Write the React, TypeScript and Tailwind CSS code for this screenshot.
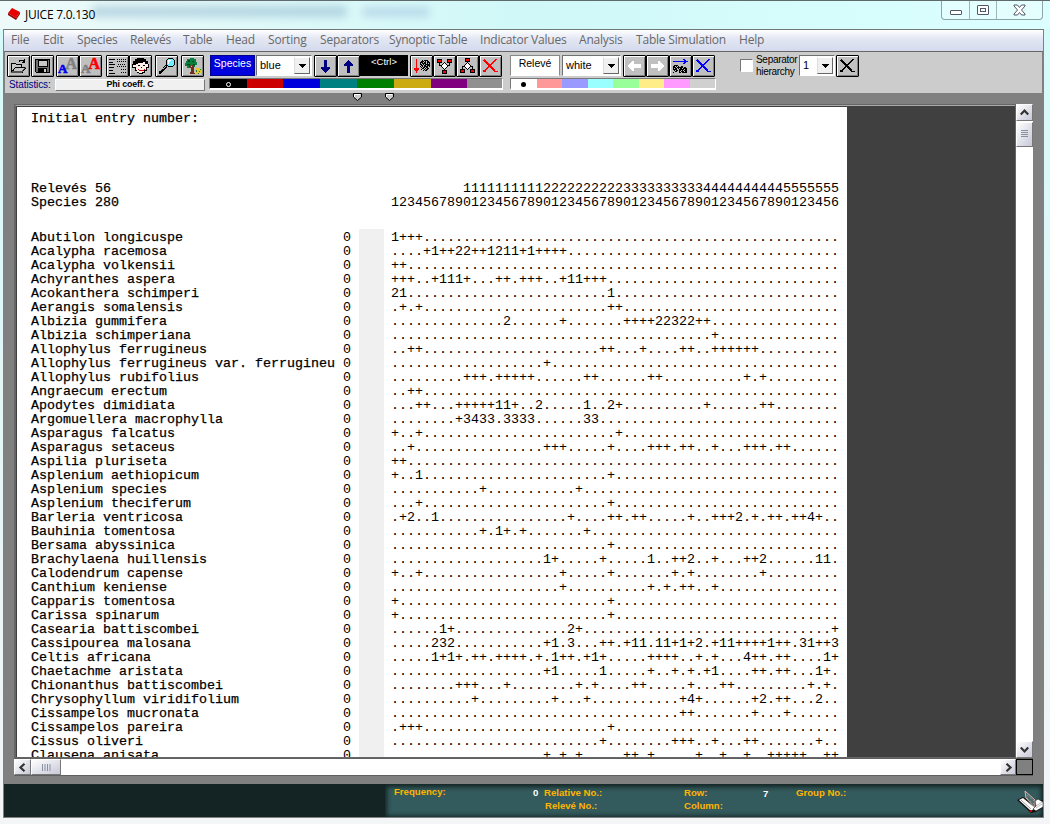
import React from "react";

type Run = [number, string];

const SPECIES: [string, Run[]][] = [
  ["Abutilon longicuspe", [[0, "1+++"]]],
  ["Acalypha racemosa", [[4, "+1++22++1211+1++++"]]],
  ["Acalypha volkensii", [[0, "++"]]],
  ["Achyranthes aspera", [[0, "+++"], [5, "+111+"], [13, "++"], [16, "+++"], [21, "+11+++"]]],
  ["Acokanthera schimperi", [[0, "21"], [27, "1"]]],
  ["Aerangis somalensis", [[1, "+"], [3, "+"], [27, "++"]]],
  ["Albizia gummifera", [[14, "2"], [21, "+"], [29, "++++22322++"]]],
  ["Albizia schimperiana", [[40, "+"]]],
  ["Allophylus ferrugineus", [[2, "++"], [26, "++"], [31, "+"], [36, "++"], [40, "++++++"]]],
  ["Allophylus ferrugineus var. ferrugineu", [[19, "+"]]],
  ["Allophylus rubifolius", [[9, "+++"], [13, "+++++"], [24, "++"], [32, "++"], [44, "+"], [46, "+"]]],
  ["Angraecum erectum", [[2, "++"]]],
  ["Apodytes dimidiata", [[3, "++"], [8, "+++++11+"], [18, "2"], [24, "1"], [27, "2+"], [39, "+"], [46, "++"]]],
  ["Argomuellera macrophylla", [[8, "+3433"], [14, "3333"], [24, "33"]]],
  ["Asparagus falcatus", [[0, "+"], [3, "+"], [28, "+"]]],
  ["Asparagus setaceus", [[2, "+"], [19, "+++"], [27, "+"], [32, "+++"], [36, "++"], [40, "+"], [44, "+++"], [48, "++"]]],
  ["Aspilia pluriseta", [[0, "++"]]],
  ["Asplenium aethiopicum", [[0, "+"], [3, "1"], [27, "+"]]],
  ["Asplenium species", [[11, "+"], [23, "+"]]],
  ["Asplenium theciferum", [[3, "+"], [27, "+"]]],
  ["Barleria ventricosa", [[1, "+2"], [5, "1"], [22, "+"], [27, "++"], [30, "++"], [37, "+"], [40, "+++2"], [45, "+"], [47, "++"], [50, "++4+"]]],
  ["Bauhinia tomentosa", [[11, "+"], [13, "1+"], [16, "+"], [24, "+"]]],
  ["Bersama abyssinica", [[27, "+"]]],
  ["Brachylaena huillensis", [[19, "1+"], [26, "+"], [32, "1"], [35, "++2"], [40, "+"], [44, "++2"], [53, "11"]]],
  ["Calodendrum capense", [[0, "+"], [3, "+"], [21, "+"], [27, "+"], [35, "+"], [37, "+"], [46, "+"]]],
  ["Canthium keniense", [[21, "+"], [32, "+"], [34, "+"], [36, "++"], [40, "+"]]],
  ["Capparis tomentosa", [[0, "+"], [27, "+"]]],
  ["Carissa spinarum", [[0, "+"], [27, "+"]]],
  ["Casearia battiscombei", [[6, "1+"], [22, "2+"], [55, "+"]]],
  ["Cassipourea malosana", [[5, "232"], [19, "+1"], [22, "3"], [26, "++"], [29, "+11"], [33, "11+1+2"], [40, "+11++++1++"], [51, "31++3"]]],
  ["Celtis africana", [[5, "1+1+"], [10, "++"], [13, "++++"], [18, "+"], [20, "1++"], [24, "+1+"], [32, "++++"], [38, "+"], [40, "+"], [44, "4++"], [48, "++"], [54, "1+"]]],
  ["Chaetachme aristata", [[19, "+1"], [26, "1"], [32, "+"], [35, "+"], [37, "+"], [39, "+1"], [45, "++"], [48, "++"], [53, "1+"]]],
  ["Chionanthus battiscombei", [[8, "+++"], [14, "+"], [23, "+"], [25, "+"], [30, "++"], [37, "+"], [41, "++"], [52, "+"], [54, "+"]]],
  ["Chrysophyllum viridifolium", [[10, "+"], [20, "+"], [24, "+"], [36, "+4+"], [45, "+2"], [48, "++"], [53, "2"]]],
  ["Cissampelos mucronata", [[36, "++"], [45, "+"], [49, "+"]]],
  ["Cissampelos pareira", [[1, "+++"], [27, "+"]]],
  ["Cissus oliveri", [[26, "+"], [35, "+++"], [40, "+"], [44, "++"], [53, "+"]]],
  ["Clausena anisata", [[19, "+"], [21, "+"], [23, "+"], [29, "++"], [32, "+"], [38, "+"], [41, "+"], [44, "+"], [47, "+++++"], [54, "++"]]],
];

const expand = (runs: Run[]) => {
  const cells = Array<string>(56).fill(".");
  runs.forEach(([at, text]) => [...text].forEach((ch, i) => (cells[at + i] = ch)));
  return cells.join("");
};

const numbers = Array.from({ length: 56 }, (_, i) => i + 1);
const tens = numbers.map((n) => (n < 10 ? " " : Math.floor(n / 10))).join("");
const ones = numbers.map((n) => n % 10).join("");

const MENU: [string, string][] = [
  ["File", "w-[32px]"],
  ["Edit", "w-[34px]"],
  ["Species", "w-[53px]"],
  ["Relevés", "w-[53px]"],
  ["Table", "w-[43px]"],
  ["Head", "w-[42px]"],
  ["Sorting", "w-[52px]"],
  ["Separators", "w-[69px]"],
  ["Synoptic Table", "w-[91px]"],
  ["Indicator Values", "w-[99px]"],
  ["Analysis", "w-[57px]"],
  ["Table Simulation", "w-[103px]"],
  ["Help", "w-[40px]"],
];

function Art({ children }: { children: React.ReactNode }) {
  return (
    <svg width="21" height="20" viewBox="-1 -1 21 20" className="shrink-0" shapeRendering="crispEdges" fill="none">
      {children}
    </svg>
  );
}

function Btn({ children }: { children: React.ReactNode }) {
  return (
    <div className="flex h-[22px] w-[23px] shrink-0 items-center justify-center rounded-[1px] border border-black bg-[#c0c0c0] shadow-[inset_1px_1px_0_#fff,inset_-1px_-1px_0_#808080]">
      {children}
    </div>
  );
}

function Combo({ text, className }: { text: string; className: string }) {
  return (
    <div className={`flex h-[21px] shrink-0 items-center border border-t-[#707070] border-l-[#707070] border-r-white border-b-white bg-white p-px ${className}`}>
      <span className="flex-1 pl-[2px] text-[11px] leading-none text-black">{text}</span>
      <div className="flex h-full w-[16px] items-center justify-center border border-t-white border-l-[#ddd] border-r-[#666] border-b-[#666] bg-[#f0f0f0]">
        <svg width="7" height="4" viewBox="0 0 7 4" shapeRendering="crispEdges"><path d="M0 0h7v1H6v1H5v1H4v1H3V3H2V2H1V1H0z" /></svg>
      </div>
    </div>
  );
}

const Cross = ({ color }: { color: string }) => (
  <Art>
    <path d="M3 3l11 11" stroke={color} strokeWidth="2.4" />
    <path d="M15 2L4 14" stroke={color} strokeWidth="1.5" />
    <path d="M2 13h3v2H2zM13 14h4v1h-4z" fill={color} />
  </Art>
);

const noise = [
  "..#.####..", ".###.#.##.", "###.##.###", "#.####.#.#", "##.#.#####", ".##.##.###", "#.#.####.#", ".#.##.##..", "..##.#.##.", ".#..#.##..", "...#.##...",
];

function Noise({ x, y, rows = noise }: { x: number; y: number; rows?: string[] }) {
  return (
    <>
      {rows.map((r, j) => [...r].map((c, i) => (c === "#" ? <rect key={`${i}-${j}`} x={x + i} y={y + j} width="1" height="1" fill="#000" /> : null)))}
    </>
  );
}

function Nodes({ flip }: { flip?: boolean }) {
  return (
    <Art>
      <g transform={flip ? "translate(0 18) scale(1 -1)" : undefined}>
        <path d="M4.500 5v3.500H7M14.500 5v3.500H12M9.500 12v3" stroke="#000" />
        <path d="M2 2h5v4H2zM12 2h5v4h-5zM7 13h5v4H7z" fill="#000" />
        <path d="M3 3h3v2H3zM13 3h3v2h-3zM8 14h3v2H8z" fill="#f00" />
        <path d="M9 5h1v1h1v1h1v1h1v2h-1v1h-1v1h-1v1H9v-1H8v-1H7v-1H6V8h1V7h1V6h1z" fill="#000" />
        <path d="M9 6h1v1h1v1h1v2h-1v1h-1v1H9v-1H8v-1H7V8h1V7h1z" fill="#fff" />
      </g>
    </Art>
  );
}

const VArrow = ({ up }: { up?: boolean }) => (
  <Art>
    <path d={up ? "M9 3h1v1h1v1h1v1h1v1h1v2h-3v7H8V9H5V7h1V6h1V5h1V4h1z" : "M8 3h3v7h3v2h-1v1h-1v1h-1v1h-1v1H9v-1H8v-1H7v-1H6v-1H5v-2h3z"} fill="#000080" />
  </Art>
);

const WArrow = ({ right }: { right?: boolean }) => (
  <Art>
    <path transform={right ? "translate(19 0) scale(-1 1)" : undefined} d="M3 8h1V7h1V6h1V5h1V4h2v3h7v4H9v3H7v-1H6v-1H5v-1H4v-1H3z" fill="#fff" />
  </Art>
);

function LetterPair({ front, back }: { front: string; back: string }) {
  return (
    <div className="relative h-[18px] w-[19px] font-['Liberation_Serif',serif] font-bold leading-none [-webkit-text-stroke:0.6px]">
      <span className={`absolute right-0 top-[-2px] text-[16px] leading-[18px] ${back}`}>A</span>
      <span className={`absolute bottom-[-1px] left-0 text-[13px] leading-[14px] ${front}`}>A</span>
    </div>
  );
}

const STRIP_A: [string, string][] = [
  ["bg-black", "w-[37px]"], ["bg-[#cc0000]", "w-[36px]"], ["bg-[#0000dd]", "w-[37px]"], ["bg-[#008080]", "w-[37px]"],
  ["bg-[#008000]", "w-[37px]"], ["bg-[#ccaa11]", "w-[37px]"], ["bg-[#800080]", "w-[36px]"], ["bg-[#909090]", "flex-1"],
];
const STRIP_B = ["bg-white", "bg-[#ff9999]", "bg-[#9999ff]", "bg-[#99ffff]", "bg-[#99ff99]", "bg-[#ffee88]", "bg-[#ff99ff]", "bg-[#d0d0d0]"];

function Toolbar() {
  return (
    <div className="flex h-[43px] items-start border border-[#808080] border-t-[#666] bg-[#cccccc] pl-[2px] pt-[3px]">
      <div className="w-[198px]">
        <div className="flex h-[23px]">
          <Btn>
            <Art>
              <path d="M2.500 15V6.500h4l1 1h5V10M2.500 15.500h10.500l4-5.500H6.500z" fill="#c8c8c8" stroke="#000" />
              <path d="M2 15.500h11l4-5.500h-1l-4 4H3z" fill="#555" />
              <path d="M10 4.500q3-3 5 0M15.500 2v3.500h-3" stroke="#000" />
            </Art>
          </Btn>
          <div className="w-px" />
          <Btn>
            <Art>
              <path d="M2.500 2.500h14v13h-13l-1-1z" fill="#707070" stroke="#000" />
              <path d="M5 3h9v6H5z" fill="#c8c8c8" stroke="#000" />
              <path d="M5 11h9v4H5z" fill="#000" /><path d="M11 12h2v3h-2z" fill="#ccc" />
            </Art>
          </Btn>
          <div className="w-[2px]" />
          <Btn><LetterPair front="text-[#0000ee]" back="text-[#808080]" /></Btn>
          <Btn><LetterPair front="text-[#808080]" back="text-[#ff0000]" /></Btn>
          <div className="w-[4px]" />
          <Btn>
            <Art>
              <path d="M1 2.500h6M1 5.500h4M1 7.500h6M1 10.500h5M1 13.500h4M1 16.500h6" stroke="#000" />
              <path d="M9 2.500h9M9 4.500h9M10 7.500h8M9 9.500h9M13 12.500h5M13 15.500h5" stroke="#000" strokeDasharray="1 1" />
            </Art>
          </Btn>
          <Btn>
            <Art>
              <path d="M6 1h7v1h2v2h2v3h1v4h-2v3h-2v2h-2v1H8v-1H6v-2H4v-3H1V7h1V4h2V2h2z" fill="#000" />
              <path d="M5 7h2V6h5V5h2v2h3v3h-2v3h-2v2h-2v1H8v-1H6v-2H5v-3H2V8h3z" fill="#fff0e8" />
              <path d="M7 8h2v1H7zM12 8h2v1h-2zM10 10h1v1h-1z" fill="#000" />
              <path d="M7 12h1v1h5v-1h1v1h-1v1H8v-1H7z" fill="#e00000" />
            </Art>
          </Btn>
          <div className="w-[3px]" />
          <Btn>
            <Art>
              <path d="M2 16l8-7" stroke="#000" strokeWidth="2.800" />
              <path d="M3 14l6-5" stroke="#fff" strokeWidth=".7" />
              <path d="M11.500 1.500h4l2 2v4l-2 2h-4l-2-2v-4z" fill="#70f0ff" stroke="#000" />
              <path d="M11 3h3v1h-1v1h-1v2h-1z" fill="#fff" />
            </Art>
          </Btn>
          <div className="w-[3px]" />
          <Btn>
            <Art>
              <path d="M3 4h1V2h3V1h4v1h2v3h1v3h-2v2H9V9H7v2H4V9H2V6h1z" fill="#088040" />
              <path d="M5 3h2v2H5zM9 4h2v1H9zM4 7h3v1H4zM10 7h2v1h-2z" fill="#004820" />
              <path d="M6 8h2v2h1V8h2v6l1 3H7l1-3v-3H7z" fill="#703018" />
              <path d="M12 11h2v2h1v-2h2v2h1v-2h1v3h-1v2h-2v1h-3v-2h-1z" fill="#e0c830" />
              <path d="M13 13h1v2h-1zM16 14h1v1h-1zM15 16h1v1h-1zM17 12h1v1h-1z" fill="#287820" />
            </Art>
          </Btn>
        </div>
        <div className="flex h-[13px] items-center text-[10px]">
          <span className="w-[48px] pl-[2px] tracking-[-0.1px] text-[#000080]">Statistics:</span>
          <span className="flex h-[12px] flex-1 items-center justify-center border border-t-white border-l-white border-r-[#777] border-b-[#777] bg-[#f0f0f0] text-[8.800px] font-bold tracking-[-0.1px] text-black">Phi coeff. C</span>
        </div>
      </div>
      <div className="ml-[4px] w-[294px]">
        <div className="flex h-[23px] pl-px">
          <div className="h-[21px] w-[45px] border border-[#000088] bg-[#0000dd] text-center text-[10.500px] leading-[14px] text-white">Species</div>
          <Combo text="blue" className="ml-px w-[56px]" />
          <div className="w-[2px]" />
          <Btn><VArrow /></Btn>
          <Btn><VArrow up /></Btn>
          <div className="h-[21px] w-[48px] bg-black text-center text-[9.500px] leading-[14px] text-white">&lt;Ctrl&gt;</div>
          <div className="w-[2px]" />
          <Btn>
            <Art>
              <path d="M4.500 2v12M2 11l2.500 4L7 11z" stroke="#f00" fill="#f00" />
              <Noise x={8} y={3} />
            </Art>
          </Btn>
          <Btn><Nodes /></Btn>
          <Btn><Nodes flip /></Btn>
          <Btn><Cross color="#ff0000" /></Btn>
        </div>
        <div className="flex h-[12px] border border-t-[#777] border-l-[#777] border-r-white border-b-[2px] border-b-white">
          {STRIP_A.map(([bg, w], i) => (
            <div key={bg} className={`flex items-center justify-center ${bg} ${w}`}>
              {i === 0 && <span className="mt-px h-[5px] w-[5px] rounded-full border border-white" />}
            </div>
          ))}
        </div>
      </div>
      <div className="ml-[7px] w-[206px]">
        <div className="flex h-[23px]">
          <div className="h-[21px] w-[50px] border border-[#888] border-b-white bg-white text-center text-[10.500px] leading-[14px] text-black">Relevé</div>
          <Combo text="white" className="ml-[2px] w-[59px]" />
          <div className="w-[2px]" />
          <Btn><WArrow /></Btn>
          <Btn><WArrow right /></Btn>
          <Btn>
            <Art>
              <path d="M2 4.500h14M12 2l4 2.500L12 7" stroke="#0000ff" />
              <Noise x={2} y={8} rows={[".####.........", "##.#.#..##....", "###.######.##.", "#.##.#.##.####", "####..#####.##", ".#.##.##.#.###", "..##..#.###.##", "#.....##.#####"]} />
            </Art>
          </Btn>
          <Btn><Cross color="#0000ff" /></Btn>
        </div>
        <div className="flex h-[12px] border border-t-[#777] border-l-[#777] border-r-white border-b-[2px] border-b-white">
          {STRIP_B.map((bg, i) => (
            <div key={bg} className={`flex flex-1 items-center justify-center ${bg}`}>
              {i === 0 && <span className="mt-px h-[5px] w-[5px] rounded-full bg-black" />}
            </div>
          ))}
        </div>
      </div>
      <div className="ml-[24px] flex">
        <div className="mt-[4px] h-[13px] w-[13px] border border-t-[#777] border-l-[#777] border-r-white border-b-white bg-white" />
        <div className="-mt-px ml-[3px] w-[43px] whitespace-nowrap text-[10px] leading-[12px] tracking-[-0.3px] text-black">Separator<br />hierarchy</div>
        <Combo text="1" className="w-[36px]" />
        <div className="w-px" />
        <Btn><Cross color="#000" /></Btn>
      </div>
    </div>
  );
}

function Chevron({ d }: { d: string }) {
  return (
    <svg width="9" height="9" viewBox="0 0 9 9" fill="none"><path d={d} stroke="#333" strokeWidth="2.2" /></svg>
  );
}

const face = "flex shrink-0 items-center justify-center border border-t-white border-l-white border-r-[#777] border-b-[#777] bg-gradient-to-br from-white to-[#c8c8d8]";

function Marker() {
  return (
    <svg width="9" height="8" viewBox="0 0 9 8"><path d="M.5.5h8v3.500l-4 3.500-4-3.500z" fill="#ccc" stroke="#000" /><path d="M1.500 4V1.500H7" stroke="#fff" fill="none" /></svg>
  );
}

function Sheet() {
  return (
    <div className="flex h-[651px] w-[830px] flex-col overflow-hidden bg-white pl-[14px] pt-[5px] font-['Liberation_Mono',monospace] text-[13.333px] leading-[14px] text-black">
      <div className="h-[70px] shrink-0 [-webkit-text-stroke:0.25px_black]">Initial entry number:</div>
      <div className="flex h-[49px] shrink-0 whitespace-pre">
        <div className="w-[360px] [-webkit-text-stroke:0.25px_black]">Relevés 56<br />Species 280</div>
        <div>{tens}<br />{ones}</div>
      </div>
      <div className="flex shrink-0 whitespace-pre">
        <div className="w-[312px] [-webkit-text-stroke:0.25px_black]">{SPECIES.map(([name]) => <div key={name} className="h-[14px]">{name}</div>)}</div>
        <div className="w-[16px]">{SPECIES.map(([name]) => <div key={name} className="h-[14px]">0</div>)}</div>
        <div className="-mt-[2px] mr-[7px] w-[25px] bg-[#f0f0f0]" />
        <div>{SPECIES.map(([name, runs]) => <div key={name} className="h-[14px]">{expand(runs)}</div>)}</div>
      </div>
    </div>
  );
}

function Book() {
  return (
    <svg width="26" height="25" viewBox="0 0 26 25">
      <path d="M0 11l6-3 5 3 7 6 3-6h5v8l-7 4-5 1z" fill="#111" />
      <path d="M2 11l4-2 12 10-4 3z" fill="#fff" />
      <path d="M4 11l10 9" stroke="#777" strokeWidth=".7" />
      <path d="M8 2l10 9v8L9 9z" fill="#48686a" stroke="#e8b0a8" strokeWidth="1" />
      <path d="M10 6l7 6M10 9l7 6" stroke="#a0b8b8" strokeDasharray="1 1" />
      <path d="M18 12l3-2 5 3v5l-7 4-3-2 3-3z" fill="#fff" stroke="#111" strokeWidth=".6" />
      <path d="M19 17l6-4M19 19l6-4" stroke="#888" strokeWidth=".6" />
      <path d="M13 21h2v2h-2z" fill="#d00" />
    </svg>
  );
}

export default function App() {
  return (
    <div className="flex h-[824px] w-[1050px] flex-col overflow-hidden bg-gradient-to-b from-[#d5fafa] via-[#e4f6f6] to-[#f4f5f7] font-['Liberation_Sans',Arial,sans-serif]">
      <header className="flex h-[29px] shrink-0 justify-between border-t border-[#606a6a] bg-gradient-to-r from-[#eefafa] via-[#d0f8f8] to-[#dcffff] pl-[7px] pr-[7px]">
        <div className="relative flex flex-1 items-center">
          <div className="absolute left-[85px] top-[5px] h-[11px] w-[255px] rounded bg-[#7fa9c5]/45 blur-[4px]" />
          <div className="absolute left-[355px] top-[7px] h-[8px] w-[68px] rounded bg-[#7e9fd0]/40 blur-[4px]" />
          <svg width="14" height="13" viewBox="0 0 14 13" className="mb-[3px]"><path d="M1 6l4-5 8 4-4 6z" fill="#e80000" /><path d="M1 6l8 5v2L1 8zM9 11l4-6v2l-4 6z" fill="#900" /></svg>
          <span className="relative ml-[4px] font-['Open_Sans',sans-serif] text-[12px] tracking-[-0.25px] text-black">JUICE 7.0.130</span>
        </div>
        <div className="flex h-[19px] w-[102px] rounded-b-[4px] border border-t-0 border-[#8ea5a8] bg-white/25">
          <div className="flex w-[28px] items-center justify-center border-r border-[#9fb5b8] pt-[5px]"><div className="h-[5px] w-[12px] rounded-[1px] border border-[#50566a] bg-white" /></div>
          <div className="flex w-[27px] items-center justify-center border-r border-[#9fb5b8]"><div className="flex h-[10px] w-[12px] items-center justify-center rounded-[1px] border border-[#50566a] bg-white"><div className="h-[4px] w-[6px] border border-[#50566a]" /></div></div>
          <div className="flex flex-1 items-center justify-center">
            <svg width="13" height="12" viewBox="0 0 13 12"><path d="M1 1h3.500l2 2.500L8.500 1H12v1L8.500 6l3.500 4v1H8.500l-2-2.500-2 2.500H1v-1l3.500-4L1 2z" fill="#fff" stroke="#50566a" /></svg>
          </div>
        </div>
      </header>

      <div className="ml-[3px] flex h-[789px] w-[1041px] flex-col border border-[#808080] border-t-[#707878] bg-[#808080]">
        <nav className="flex h-[21px] shrink-0 items-center bg-gradient-to-b from-white via-[#e4e8f4] via-40% to-[#d4daed] pb-px pl-[7px] font-['Open_Sans',sans-serif] text-[12px] tracking-[-0.2px] text-[#686868]">
          {MENU.map(([label, w]) => <span key={label} className={`shrink-0 whitespace-nowrap ${w}`}>{label}</span>)}
        </nav>
        <Toolbar />
        <div className="flex h-[10px] shrink-0 pl-[349px]">
          <div className="-mt-px"><Marker /></div>
          <div className="-mt-px ml-[23px]"><Marker /></div>
        </div>

        <main className="ml-[10px] flex h-[654px] w-[1019px] shrink-0">
          <div className="h-full w-[1002px] border-2 border-r-0 border-[#666] border-t-[#aaa] border-b-0 bg-[#404040] outline-1 -outline-offset-1 outline-[#666]">
            <div className="pl-px pt-px"><Sheet /></div>
          </div>
          <div className="flex w-[17px] flex-col bg-white">
            <div className={`${face} h-[17px]`}><Chevron d="M.8 6.500l3.700-4 3.700 4" /></div>
            <div className={`${face} mt-px h-[25px]`}><svg width="7" height="9" viewBox="0 0 7 9"><path d="M0 .5h7M0 2.500h7M0 4.500h7M0 6.500h7" stroke="#8890a0" /></svg></div>
            <div className="flex-1" />
            <div className={`${face} h-[17px]`}><Chevron d="M.8 2.500l3.700 4 3.700-4" /></div>
          </div>
        </main>
        <div className="ml-[10px] flex h-[18px] w-[1019px] shrink-0 border-t border-b border-[#606060]">
          <div className="flex w-[1002px] bg-white">
            <div className={`${face} w-[17px]`}><Chevron d="M6.500.8l-4 3.700 4 3.700" /></div>
            <div className={`${face} w-[30px]`}><svg width="9" height="7" viewBox="0 0 9 7"><path d="M.5 0v7M3 0v7M5.500 0v7M8 0v7" stroke="#8890a0" /></svg></div>
            <div className="flex-1" />
            <div className={`${face} w-[16px]`}><Chevron d="M2.500.8l4 3.700-4 3.700" /></div>
          </div>
          <div className="w-[17px] border border-black bg-[#808080]" />
        </div>

        <footer className="mt-auto flex h-[33px] shrink-0 bg-[#142424] text-[9.600px] font-bold leading-[13px] text-[#ffb400]">
          <div className="w-[381px]" />
          <div className="flex flex-1 bg-[#335a5c] pl-[9px] pt-[2px] shadow-[inset_0_1px_4px_2px_#142424]">
            <div className="-mt-px w-[139px]">Frequency:</div>
            <div className="w-[11px] text-white">0</div>
            <div className="w-[140px]">Relative No.:<br /><span className="pl-px">Relevé No.:</span></div>
            <div className="w-[79px]">Row:<br />Column:</div>
            <div className="w-[33px] pt-px text-white">7</div>
            <div className="w-[100px]">Group No.:</div>
            <div className="ml-auto mt-[3px] h-[25px] w-[26px]"><Book /></div>
          </div>
        </footer>
      </div>
    </div>
  );
}
